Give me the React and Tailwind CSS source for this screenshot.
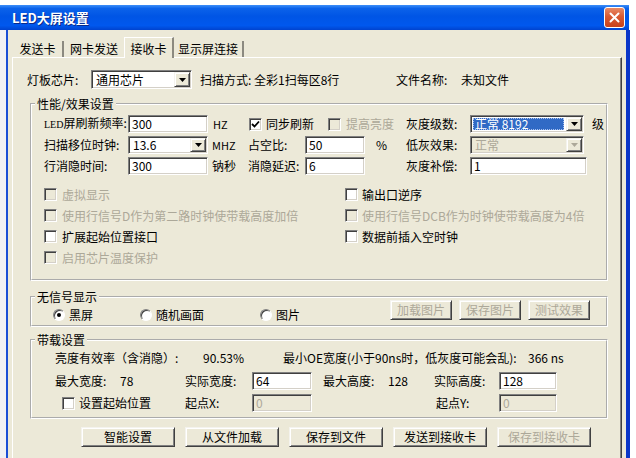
import React from "react";

const sunken =
  "border border-t-[#808080] border-l-[#808080] border-b-white border-r-white shadow-[inset_1px_1px_0_#404040,inset_-1px_-1px_0_#d4d0c8]";
const raised =
  "border border-t-[#f4f3ee] border-l-[#f4f3ee] border-b-[#404040] border-r-[#404040] shadow-[inset_1px_1px_0_#ffffff,inset_-1px_-1px_0_#808080]";
const dis = "text-[#aca899]";

function Arrow({ disabled }) {
  return (
    <svg width="7" height="4" viewBox="0 0 7 4">
      <path d="M0 0 H7 L3.5 4 Z" fill={disabled ? "#aca899" : "#000"} />
    </svg>
  );
}

function Input({ w, value, disabled }) {
  return (
    <div
      className={`${w} h-[18px] flex items-center pl-[3px] whitespace-nowrap ${sunken} ${
        disabled ? "bg-[#ECE9D8] text-[#aca899]" : "bg-white"
      }`}
    >
      {value}
    </div>
  );
}

function Combo({ w, h, value, disabled, selected }) {
  return (
    <div className={`${w} ${h} flex p-[1px] ${sunken} ${disabled ? "bg-[#ECE9D8]" : "bg-white"}`}>
      <div className="flex-1 flex items-center pl-[1px] pr-[2px] py-[1px] min-w-0">
        {selected ? (
          <div className="w-full h-full flex items-center pl-[2px] bg-[#316AC5] text-white whitespace-nowrap outline-1 outline-dotted outline-[#a9c1ee] -outline-offset-1">
            {value}
          </div>
        ) : (
          <span className={`pl-[2px] whitespace-nowrap ${disabled ? dis : ""}`}>{value}</span>
        )}
      </div>
      <div className={`w-[16px] h-full flex items-center justify-center bg-[#ECE9D8] ${raised}`}>
        <Arrow disabled={disabled} />
      </div>
    </div>
  );
}

function Check({ checked, disabled, label, gap = "ml-[5px]", className = "" }) {
  return (
    <div className={`flex items-center whitespace-nowrap ${className}`}>
      <div
        className={`w-[13px] h-[13px] shrink-0 flex items-center justify-center ${sunken} ${
          disabled ? "bg-[#ECE9D8]" : "bg-white"
        }`}
      >
        {checked && (
          <svg width="9" height="9" viewBox="0 0 9 9">
            <path d="M1 4 L3.5 6.5 L8 1.5" stroke="#000" strokeWidth="1.8" fill="none" />
          </svg>
        )}
      </div>
      <span className={`${gap} ${disabled ? dis : ""}`}>{label}</span>
    </div>
  );
}

function Radio({ checked, label, className = "" }) {
  return (
    <div className={`flex items-center whitespace-nowrap ${className}`}>
      <div className="w-[12px] h-[12px] rounded-full bg-white border border-t-[#808080] border-l-[#808080] border-b-white border-r-white shadow-[inset_1px_1px_0_#404040] flex items-center justify-center">
        {checked && <div className="w-[4px] h-[4px] rounded-full bg-black" />}
      </div>
      <span className="ml-[4px]">{label}</span>
    </div>
  );
}

function Btn({ w, label, disabled, className = "" }) {
  return (
    <div
      className={`${w} h-[20px] flex items-center justify-center bg-[#ECE9D8] whitespace-nowrap ${raised} ${
        disabled ? dis : ""
      } ${className}`}
    >
      {label}
    </div>
  );
}

function Group({ title, className, children }) {
  return (
    <fieldset
      className={`ml-[17px] w-[578px] border-2 border-white [border-style:groove]! ${className}`}
    >
      <legend className="ml-[3px] px-[2px] leading-[14px] h-[14px]">{title}</legend>
      {children}
    </fieldset>
  );
}

export default function App() {
  return (
    <div className="w-[636px] h-[458px] overflow-hidden bg-white text-[12px] leading-[16px] text-black font-['Noto_Sans_CJK_SC','Noto_Sans',sans-serif]">
      <div className="h-[5px]" />
      {/* Title bar */}
      <div className="w-[629px] h-[25px] flex items-center justify-between pl-[12px] pr-[4px] bg-[linear-gradient(180deg,#3d8ef8_0%,#0b62ea_14%,#0055e5_45%,#0058ee_82%,#0043cf_100%)]">
        <span className="text-white font-bold text-[13px] [text-shadow:1px_1px_0_#0a2a8a]">LED大屏设置</span>
        <div className="w-[21px] h-[21px] rounded-[3px] border border-white bg-[linear-gradient(180deg,#e88a66_0%,#d95a33_45%,#c8421c_100%)] flex items-center justify-center">
          <svg width="11" height="11" viewBox="0 0 11 11">
            <path d="M1.5 1.5 L9.5 9.5 M9.5 1.5 L1.5 9.5" stroke="#fff" strokeWidth="2" strokeLinecap="round" />
          </svg>
        </div>
      </div>

      <div className="flex h-[428px]">
        <div className="w-[6px] bg-[#f1f1f4]" />
        <div className="w-[2px] bg-[#1a4ed6]" />
        <div className="w-[618px] bg-[#ECE9D8] pt-[6px]">
          {/* Tabs */}
          <div className="h-[21px] flex items-end pl-[5px]">
            <div className="w-[51px] h-[16px] flex items-center justify-center border-r-2 border-r-[#8c8a80]">发送卡</div>
            <div className="w-[60px] h-[16px] flex items-center justify-center">网卡发送</div>
            <div className="relative z-10 -mb-[1px] w-[50px] h-[21px] flex items-center justify-center bg-[#ECE9D8] border-t border-l border-t-white border-l-white border-r-2 border-r-[#8c8a80] pt-[1px]">
              接收卡
            </div>
            <div className="w-[70px] h-[16px] flex items-center justify-center border-r-2 border-r-[#8c8a80]">显示屏连接</div>
          </div>

          {/* Panel */}
          <div className="ml-[4px] w-[610px] h-[420px] border-l border-t border-l-white border-t-white border-r border-r-[#404040] shadow-[inset_-1px_0_0_#808080]">
            <div className="mt-[12px] ml-[14px] h-[19px] flex items-center whitespace-nowrap">
              <span className="w-[64px]">灯板芯片:</span>
              <Combo w="w-[101px]" h="h-[19px]" value="通用芯片" />
              <span className="ml-[8px] w-[196px]">扫描方式: 全彩1扫每区8行</span>
              <span className="w-[65px]">文件名称:</span>
              <span>未知文件</span>
            </div>

            {/* 性能/效果设置 */}
            <Group title="性能/效果设置" className="mt-[8px] pb-[11px]">
              <div className="pl-[12px] whitespace-nowrap">
                <div className="mt-[4px] h-[18px] flex items-center">
                  <span className="w-[84px]">
                    <span className="text-[10px] font-['Liberation_Serif',serif]">LED</span>屏刷新频率:
                  </span>
                  <Input w="w-[80px]" value="300" />
                  <span className="w-[40px] pl-[5px] text-[11px]">HZ</span>
                  <div className="w-[158px] flex items-center">
                    <Check checked label="同步刷新" gap="ml-[4px]" className="w-[80px] pl-[1px]" />
                    <Check disabled label="提高亮度" gap="ml-[5px]" />
                  </div>
                  <span className="w-[64px]">灰度级数:</span>
                  <Combo w="w-[114px]" h="h-[18px]" value="正常 8192" selected />
                  <span className="ml-[8px]">级</span>
                </div>
                <div className="mt-[3px] h-[18px] flex items-center">
                  <span className="w-[84px]">扫描移位时钟:</span>
                  <Combo w="w-[80px]" h="h-[18px]" value="13.6" />
                  <span className="w-[40px] pl-[4px] text-[11px]">MHZ</span>
                  <span className="w-[57px]">占空比:</span>
                  <Input w="w-[60px]" value="50" />
                  <span className="w-[41px] pl-[11px]">%</span>
                  <span className="w-[64px]">低灰效果:</span>
                  <Combo w="w-[114px]" h="h-[18px]" value="正常" disabled />
                </div>
                <div className="mt-[3px] h-[18px] flex items-center">
                  <span className="w-[84px]">行消隐时间:</span>
                  <Input w="w-[80px]" value="300" />
                  <span className="w-[40px] pl-[4px]">钠秒</span>
                  <span className="w-[57px]">消隐延迟:</span>
                  <Input w="w-[60px]" value="6" />
                  <span className="w-[41px]" />
                  <span className="w-[64px]">灰度补偿:</span>
                  <Input w="w-[117px]" value="1" />
                </div>

                <div className="mt-[9px]">
                  <div className="h-[21px] flex items-center">
                    <Check disabled label="虚拟显示" className="w-[301px]" />
                    <Check label="输出口逆序" gap="ml-[4px]" />
                  </div>
                  <div className="h-[21px] flex items-center">
                    <Check disabled label="使用行信号D作为第二路时钟使带载高度加倍" className="w-[301px]" />
                    <Check disabled label="使用行信号DCB作为时钟使带载高度为4倍" gap="ml-[4px]" />
                  </div>
                  <div className="h-[21px] flex items-center">
                    <Check label="扩展起始位置接口" className="w-[301px]" />
                    <Check label="数据前插入空时钟" gap="ml-[4px]" />
                  </div>
                  <div className="h-[21px] flex items-center">
                    <Check disabled label="启用芯片温度保护" className="w-[301px]" />
                  </div>
                </div>
              </div>
            </Group>

            {/* 无信号显示 */}
            <Group title="无信号显示" className="mt-[9px] pb-[5px]">
              <div className="-mt-[4px] pl-[21px] h-[20px] flex items-start whitespace-nowrap">
                <Radio checked label="黑屏" className="w-[87px] mt-[7px]" />
                <Radio label="随机画面" className="w-[120px] mt-[7px]" />
                <Radio label="图片" className="w-[130px] mt-[7px]" />
                <Btn w="w-[62px]" label="加载图片" disabled />
                <Btn w="w-[62px]" label="保存图片" disabled className="ml-[7px]" />
                <Btn w="w-[62px]" label="测试效果" disabled className="ml-[7px]" />
              </div>
            </Group>

            {/* 带载设置 */}
            <Group title="带载设置" className="mt-[6px] pb-[5px]">
              <div className="pl-[23px] whitespace-nowrap">
                <div className="mt-[2px] h-[18px] flex items-center">
                  <span className="w-[148px]">亮度有效率（含消隐）:</span>
                  <span className="w-[80px]">90.53%</span>
                  <span className="w-[245px]">最小OE宽度(小于90ns时，低灰度可能会乱):</span>
                  <span>366 ns</span>
                </div>
                <div className="mt-[5px] h-[18px] flex items-center">
                  <span className="w-[65px]">最大宽度:</span>
                  <span className="w-[65px]">78</span>
                  <span className="w-[67px]">实际宽度:</span>
                  <Input w="w-[60px]" value="64" />
                  <span className="ml-[11px] w-[65px]">最大高度:</span>
                  <span className="w-[46px]">128</span>
                  <span className="w-[65px]">实际高度:</span>
                  <Input w="w-[58px]" value="128" />
                </div>
                <div className="mt-[4px] h-[18px] flex items-center">
                  <div className="w-[130px] pl-[7px]">
                    <Check label="设置起始位置" gap="ml-[4px]" />
                  </div>
                  <span className="w-[67px]">起点X:</span>
                  <Input w="w-[60px]" value="0" disabled />
                  <span className="w-[124px]" />
                  <span className="w-[63px]">起点Y:</span>
                  <Input w="w-[58px]" value="0" disabled />
                </div>
              </div>
            </Group>

            {/* Bottom buttons */}
            <div className="mt-[8px] ml-[68px] flex gap-[10px]">
              <Btn w="w-[94px]" label="智能设置" />
              <Btn w="w-[94px]" label="从文件加载" />
              <Btn w="w-[94px]" label="保存到文件" />
              <Btn w="w-[94px]" label="发送到接收卡" />
              <Btn w="w-[94px]" label="保存到接收卡" disabled />
            </div>
          </div>
        </div>
        <div className="w-[4px] bg-[#0a36c8]" />
      </div>
    </div>
  );
}
